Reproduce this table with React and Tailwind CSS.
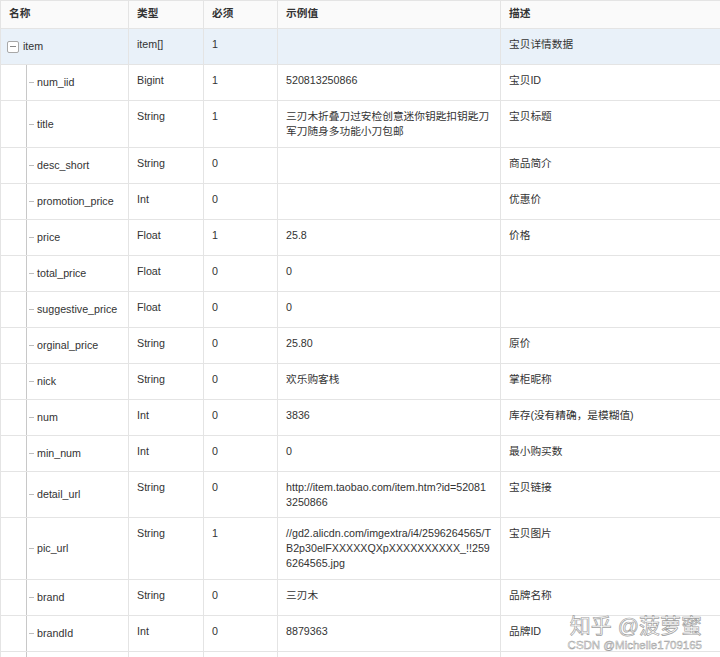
import React from "react";

const rows = [
  { name: "num_iid", type: "Bigint", req: "1", ex: "520813250866", desc: "宝贝ID", h: "h-[36px]" },
  { name: "title", type: "String", req: "1", ex: "三刃木折叠刀过安检创意迷你钥匙扣钥匙刀军刀随身多功能小刀包邮", desc: "宝贝标题", h: "h-[47px]" },
  { name: "desc_short", type: "String", req: "0", ex: "", desc: "商品简介", h: "h-[36px]" },
  { name: "promotion_price", type: "Int", req: "0", ex: "", desc: "优惠价", h: "h-[36px]" },
  { name: "price", type: "Float", req: "1", ex: "25.8", desc: "价格", h: "h-[36px]" },
  { name: "total_price", type: "Float", req: "0", ex: "0", desc: "", h: "h-[36px]" },
  { name: "suggestive_price", type: "Float", req: "0", ex: "0", desc: "", h: "h-[36px]" },
  { name: "orginal_price", type: "String", req: "0", ex: "25.80", desc: "原价", h: "h-[36px]" },
  { name: "nick", type: "String", req: "0", ex: "欢乐购客栈", desc: "掌柜昵称", h: "h-[36px]" },
  { name: "num", type: "Int", req: "0", ex: "3836", desc: "库存(没有精确，是模糊值)", h: "h-[36px]" },
  { name: "min_num", type: "Int", req: "0", ex: "0", desc: "最小购买数", h: "h-[36px]" },
  { name: "detail_url", type: "String", req: "0", ex: "http://item.taobao.com/item.htm?id=520813250866", desc: "宝贝链接", h: "h-[46px]" },
  { name: "pic_url", type: "String", req: "1", ex: "//gd2.alicdn.com/imgextra/i4/2596264565/TB2p30elFXXXXXQXpXXXXXXXXXX_!!2596264565.jpg", desc: "宝贝图片", h: "h-[62px]" },
  { name: "brand", type: "String", req: "0", ex: "三刃木", desc: "品牌名称", h: "h-[36px]" },
  { name: "brandId", type: "Int", req: "0", ex: "8879363", desc: "品牌ID", h: "h-[36px]" },
  { name: "", type: "", req: "", ex: "", desc: "", h: "h-[36px]" },
];

const grid = "grid grid-cols-[128px_75px_74px_223px_1fr]";
const cell = "border-r border-[#e4e4e4] px-[8px] pt-[8px] break-all";
const exCell = "border-r border-[#e4e4e4] pl-[8px] pr-[9px] pt-[8px] break-all";

export default function App() {
  return (
    <div
      className="relative w-[720px] h-[657px] overflow-hidden bg-white text-[#333] text-[10.7px] leading-[15px]"
      style={{ fontFamily: '"Liberation Sans", "Noto Sans CJK SC", sans-serif' }}
    >
      <div className="border-l border-t border-[#e4e4e4]">
        {/* header */}
        <div className={`${grid} h-[28px] bg-[#fafafa] border-b border-[#e4e4e4] font-bold text-[#333]`}>
          <div className="border-r border-[#e4e4e4] px-[8px] pt-[5px]">名称</div>
          <div className="border-r border-[#e4e4e4] px-[8px] pt-[5px]">类型</div>
          <div className="border-r border-[#e4e4e4] px-[8px] pt-[5px]">必须</div>
          <div className="border-r border-[#e4e4e4] px-[8px] pt-[5px]">示例值</div>
          <div className="px-[8px] pt-[5px]">描述</div>
        </div>
        {/* item row */}
        <div className={`${grid} h-[36px] bg-[#e9f1f9] border-b border-[#e4e4e4]`}>
          <div className="border-r border-[#e4e4e4] flex items-center pl-[6px]">
            <div className="w-[12px] h-[12px] border border-[#a8a8a8] rounded-[2px] bg-white flex items-center justify-center">
              <div className="w-[6px] h-px bg-[#888]" />
            </div>
            <span className="ml-[4px]">item</span>
          </div>
          <div className={cell}>item[]</div>
          <div className={cell}>1</div>
          <div className={exCell}></div>
          <div className="px-[8px] pt-[8px]">宝贝详情数据</div>
        </div>
        {rows.map((r, i) => (
          <div key={i} className={`${grid} ${r.h} border-b border-[#e4e4e4]`}>
            <div className="border-r border-[#e4e4e4] flex items-stretch">
              <div className="w-[25px] shrink-0" />
              <div className="w-px bg-[#c8c8c8] shrink-0" />
              <div className="flex items-center">
                <div className="w-[5px] h-px bg-[#bdbdbd] ml-[2px]" />
                <span className="ml-[3px]">{r.name}</span>
              </div>
            </div>
            <div className={cell}>{r.type}</div>
            <div className={cell}>{r.req}</div>
            <div className={exCell}>{r.ex}</div>
            <div className="px-[8px] pt-[8px]">{r.desc}</div>
          </div>
        ))}
      </div>
      {/* watermark */}
      <div className="absolute right-[18px] top-[612px] flex flex-col items-end pointer-events-none">
        <div className="text-[21px] leading-[28px] text-white [-webkit-text-stroke:0.7px_#a0a0a0]">
          知乎 @菠萝蜜
        </div>
        <div className="text-[11.5px] leading-[12px] text-white [-webkit-text-stroke:0.5px_#a0a0a0] -mt-[1px]">
          CSDN @Michelle1709165
        </div>
      </div>
    </div>
  );
}
